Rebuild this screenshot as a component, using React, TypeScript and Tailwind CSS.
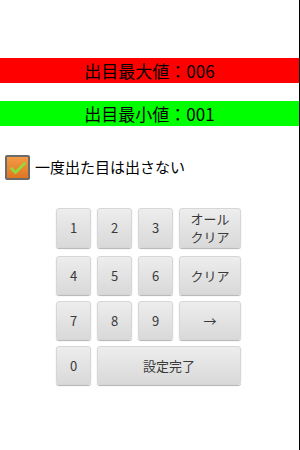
import React from "react";

const font = { fontFamily: '"Noto Sans CJK JP", "Noto Sans", sans-serif' };

function Key({ children, className = "" }: { children: React.ReactNode; className?: string }) {
  return (
    <div
      className={`flex items-center justify-center rounded-[3px] bg-gradient-to-b from-[#ededed] to-[#d9d9d9] text-[13px] leading-[16px] text-[#3a3a3a] shadow-[0_1px_1px_rgba(0,0,0,0.3)] border border-[#d6d6d6] ${className}`}
    >
      {children}
    </div>
  );
}

export default function App() {
  return (
    <div className="w-[300px] h-[450px] bg-white border-r border-black flex flex-col" style={font}>
      <div className="h-[58px]" />
      <div className="h-[25px] bg-[#ff0000] flex items-center justify-center text-[17px] text-black">
        出目最大値：006
      </div>
      <div className="h-[18px]" />
      <div className="h-[25px] bg-[#00ff00] flex items-center justify-center text-[17px] text-black">
        出目最小値：001
      </div>
      <div className="h-[29px]" />
      <div className="flex items-center h-[25px] pl-[5px] gap-[5px]">
        <div className="w-[25px] h-[25px] rounded-[2px] border-2 border-[#6b6b6b] bg-gradient-to-b from-[#f29a45] to-[#e0761f] flex items-center justify-center">
          <svg width="18" height="16" viewBox="0 0 18 16">
            <path d="M2.5 8.5 L6.5 12.5 L15.5 3.5" fill="none" stroke="#8fdc3a" strokeWidth="2.6" strokeLinecap="round" strokeLinejoin="round" />
          </svg>
        </div>
        <span className="text-[15px] text-black">一度出た目は出さない</span>
      </div>
      <div className="h-[28px]" />
      <div className="grid grid-cols-[35px_35px_35px_62px] gap-x-[6px] pl-[56px]">
        <Key className="h-[40px]">1</Key>
        <Key className="h-[40px]">2</Key>
        <Key className="h-[40px]">3</Key>
        <Key className="h-[40px] flex-col text-[12.5px] !leading-[18px]">
          <span>オール</span>
          <span>クリア</span>
        </Key>
      </div>
      <div className="h-[8px]" />
      <div className="grid grid-cols-[35px_35px_35px_62px] gap-x-[6px] gap-y-[6px] pl-[56px]">
        <Key className="h-[39px]">4</Key>
        <Key className="h-[39px]">5</Key>
        <Key className="h-[39px]">6</Key>
        <Key className="h-[39px]">クリア</Key>
        <Key className="h-[39px]">7</Key>
        <Key className="h-[39px]">8</Key>
        <Key className="h-[39px]">9</Key>
        <Key className="h-[39px]">→</Key>
        <Key className="h-[39px]">0</Key>
        <Key className="h-[39px] col-span-3">設定完了</Key>
      </div>
    </div>
  );
}
